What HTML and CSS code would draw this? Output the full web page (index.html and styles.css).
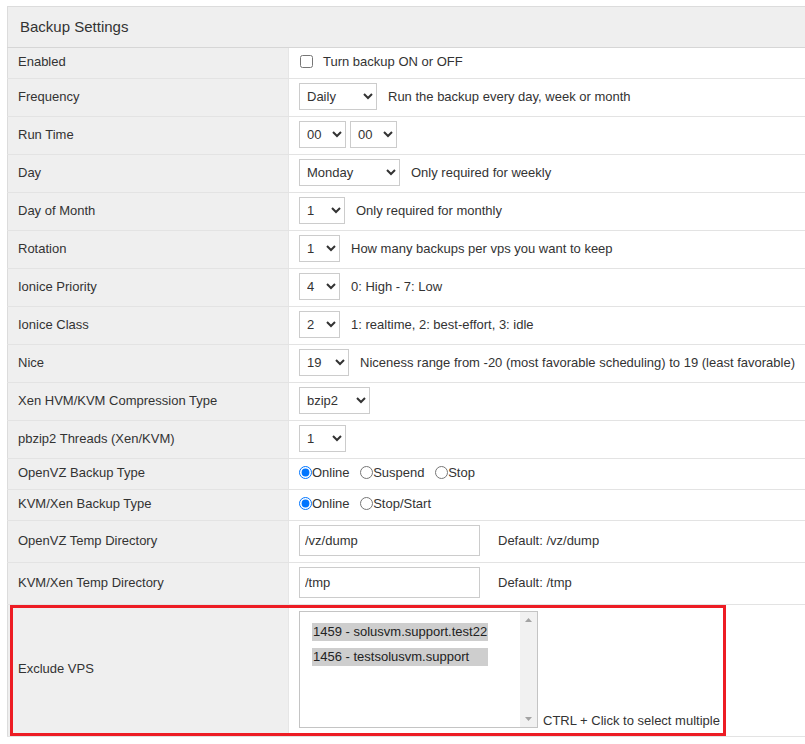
FILE: index.html
```html
<!DOCTYPE html>
<html lang="en">
<head>
  <meta charset="UTF-8" />
  <title>Backup Settings</title>
  <link rel="stylesheet" href="styles.css">
</head>
<body>

  <table class="settings">
    <colgroup>
      <col class="col-label" />
      <col />
    </colgroup>
    <thead>
      <tr><th colspan="2">Backup Settings</th></tr>
    </thead>
    <tbody>
      <tr class="short">
        <td class="label">Enabled</td>
        <td><label class="check"><input type="checkbox" />Turn backup ON or OFF</label></td>
      </tr>
      <tr>
        <td class="label">Frequency</td>
        <td>
          <div class="field">
            <select class="w78"><option>Daily</option><option>Weekly</option><option>Monthly</option></select>
            <span>Run the backup every day, week or month</span>
          </div>
        </td>
      </tr>
      <tr>
        <td class="label">Run Time</td>
        <td>
          <div class="field pair">
            <select class="w47"><option>00</option></select>
            <select class="w47"><option>00</option></select>
          </div>
        </td>
      </tr>
      <tr>
        <td class="label">Day</td>
        <td>
          <div class="field">
            <select class="w101"><option>Monday</option></select>
            <span>Only required for weekly</span>
          </div>
        </td>
      </tr>
      <tr>
        <td class="label">Day of Month</td>
        <td>
          <div class="field">
            <select class="w46"><option>1</option></select>
            <span>Only required for monthly</span>
          </div>
        </td>
      </tr>
      <tr>
        <td class="label">Rotation</td>
        <td>
          <div class="field">
            <select class="w41"><option>1</option></select>
            <span>How many backups per vps you want to keep</span>
          </div>
        </td>
      </tr>
      <tr>
        <td class="label">Ionice Priority</td>
        <td>
          <div class="field">
            <select class="w41"><option>4</option></select>
            <span>0: High - 7: Low</span>
          </div>
        </td>
      </tr>
      <tr>
        <td class="label">Ionice Class</td>
        <td>
          <div class="field">
            <select class="w41"><option>2</option></select>
            <span>1: realtime, 2: best-effort, 3: idle</span>
          </div>
        </td>
      </tr>
      <tr>
        <td class="label">Nice</td>
        <td>
          <div class="field">
            <select class="w51"><option>19</option></select>
            <span>Niceness range from -20 (most favorable scheduling) to 19 (least favorable)</span>
          </div>
        </td>
      </tr>
      <tr>
        <td class="label">Xen HVM/KVM Compression Type</td>
        <td>
          <div class="field">
            <select class="w71"><option>bzip2</option></select>
          </div>
        </td>
      </tr>
      <tr>
        <td class="label">pbzip2 Threads (Xen/KVM)</td>
        <td>
          <div class="field">
            <select class="w47"><option>1</option></select>
          </div>
        </td>
      </tr>
      <tr class="short">
        <td class="label">OpenVZ Backup Type</td>
        <td>
          <label class="radio"><input type="radio" name="ovz" checked />Online</label>
          <label class="radio"><input type="radio" name="ovz" />Suspend</label>
          <label class="radio"><input type="radio" name="ovz" />Stop</label>
        </td>
      </tr>
      <tr class="short">
        <td class="label">KVM/Xen Backup Type</td>
        <td>
          <label class="radio"><input type="radio" name="kvm" checked />Online</label>
          <label class="radio"><input type="radio" name="kvm" />Stop/Start</label>
        </td>
      </tr>
      <tr>
        <td class="label">OpenVZ Temp Directory</td>
        <td>
          <div class="field wide-gap">
            <input type="text" class="text-input" value="/vz/dump" />
            <span>Default: /vz/dump</span>
          </div>
        </td>
      </tr>
      <tr>
        <td class="label">KVM/Xen Temp Directory</td>
        <td>
          <div class="field wide-gap">
            <input type="text" class="text-input" value="/tmp" />
            <span>Default: /tmp</span>
          </div>
        </td>
      </tr>
      <tr class="tall">
        <td class="label flagged">
          Exclude VPS
          <div class="mark"></div>
        </td>
        <td>
          <div class="field bottom">
            <div class="listbox">
              <div class="options">
                <div class="option">1459 - solusvm.support.test22</div>
                <div class="option">1456 - testsolusvm.support</div>
              </div>
              <div class="scrollbar">
                <svg width="17" height="10" viewBox="0 0 17 10"><path d="M5 7 L8.5 3 L12 7 Z" fill="#a3a3a3"/></svg>
                <svg width="17" height="10" viewBox="0 0 17 10"><path d="M5 3 L8.5 7 L12 3 Z" fill="#a3a3a3"/></svg>
              </div>
            </div>
            <span class="hint">CTRL + Click to select multiple</span>
          </div>
        </td>
      </tr>
    </tbody>
  </table>

</body>
</html>
```

FILE: styles.css
```css
* {
  box-sizing: border-box;
}
body {
  margin: 6px 0 0 7px;
  font-family: "Liberation Sans", Arial, sans-serif;
  font-size: 13px;
  color: #333;
  background: #fff;
}

.settings {
  width: 798px;
  border-collapse: collapse;
  table-layout: fixed;
  border-top: 1px solid #dcdcdc;
  border-left: 1px solid #dcdcdc;
}
.col-label {
  width: 281px;
}
.settings th {
  height: 41px;
  padding: 0 12px 1px;
  text-align: left;
  font-size: 15px;
  font-weight: normal;
  background: #efefef;
  border-bottom: 1px solid #d6d6d6;
}
.settings td {
  height: 38px;
  padding: 4px 10px 6px;
  line-height: 20px;
  border-bottom: 1px solid #e3e3e3;
  vertical-align: middle;
  white-space: nowrap;
}
.settings td.label {
  background: #efefef;
  border-right: 1px solid #e6e6e6;
}
.settings tr.short td {
  height: 31px;
}
.settings tr.tall td {
  height: 132px;
  padding: 5px 10px 8px;
}

.field {
  display: flex;
  align-items: center;
  gap: 11px;
}
.field.pair {
  gap: 4px;
}
.field.wide-gap {
  gap: 18px;
}
.field.bottom {
  align-items: flex-end;
  gap: 5px;
}

select {
  height: 27px;
  padding: 0 3px;
  font-family: inherit;
  font-size: 13px;
  color: #333;
  background: #fff;
  border: 1px solid #ccc;
  border-radius: 0;
}
.w41 { width: 41px; }
.w46 { width: 46px; }
.w47 { width: 47px; }
.w51 { width: 51px; }
.w71 { width: 71px; }
.w78 { width: 78px; }
.w101 { width: 101px; }

.check input {
  width: 13px;
  height: 13px;
  margin: 0 10px 0 1px;
  vertical-align: -2px;
}

.radio {
  margin-right: 7px;
}
.radio input {
  width: 13px;
  height: 13px;
  margin: 0;
  vertical-align: -2px;
}

.text-input {
  width: 181px;
  height: 31px;
  padding: 0 5px;
  font-family: inherit;
  font-size: 13px;
  color: #333;
  border: 1px solid #ccc;
  border-radius: 0;
}

.listbox {
  display: flex;
  width: 239px;
  height: 117px;
  border: 1px solid #c4c4c4;
  background: #fff;
}
.options {
  flex-grow: 1;
  padding: 11px 0 0 12px;
}
.option {
  width: 176px;
  height: 18px;
  margin-bottom: 7px;
  padding-left: 1px;
  line-height: 18px;
  color: #222;
  background: #cecece;
}
.scrollbar {
  width: 17px;
  display: flex;
  flex-direction: column;
  justify-content: space-between;
  padding: 3px 0;
  background: #f1f1f1;
}
.scrollbar svg {
  display: block;
}
.hint {
  line-height: 15px;
}

.flagged {
  position: relative;
}
.mark {
  position: absolute;
  top: 0;
  left: 2px;
  width: 716px;
  height: 131px;
  border: 3px solid #ed1c24;
  pointer-events: none;
}
```
